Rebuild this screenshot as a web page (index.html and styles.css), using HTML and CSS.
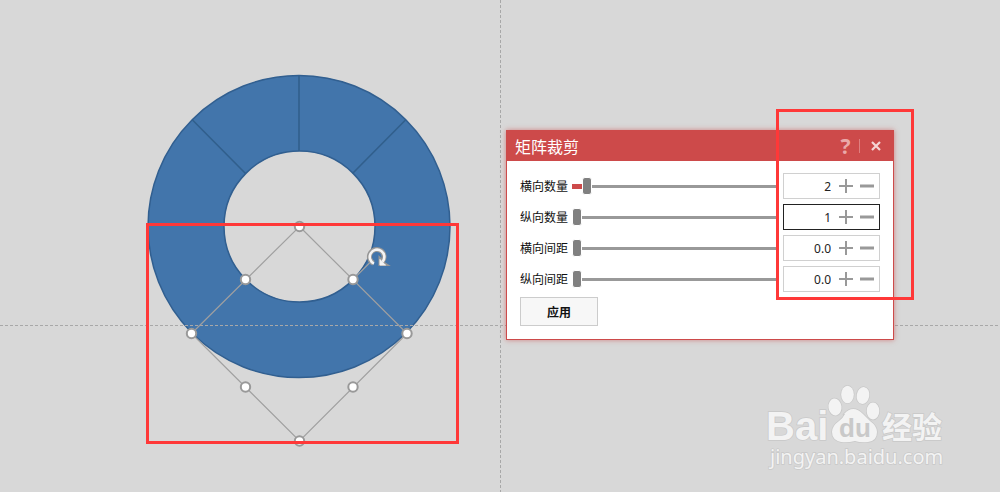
FILE: index.html
```html
<!DOCTYPE html>
<html lang="zh-CN">
<head>
<meta charset="utf-8">
<title>矩阵裁剪</title>
<link rel="stylesheet" href="styles.css">
</head>
<body>
<main class="canvas">
  <svg class="drawing" width="1000" height="492" viewBox="0 0 1000 492" aria-hidden="true">
    <path class="ring" fill-rule="evenodd" d="M148 226.500a151 151 0 1 0 302 0a151 151 0 1 0-302 0zM224 226.500a75.500 75.500 0 1 0 151 0a75.500 75.500 0 1 0-151 0z"/>
    <path class="cut" d="M299 76v75M192.500 120l53 53.500M405.500 120l-53 53.500"/>
  </svg>
  <div class="guide guide-x"></div>
  <div class="guide guide-y"></div>
  <svg class="drawing" width="1000" height="492" viewBox="0 0 1000 492" aria-hidden="true">
    <path class="outline" d="M299.500 226.500L407 333.500L299.500 441L191.500 333.500zM353 279.500l17-17"/>
    <g class="handles">
      <circle cx="299.500" cy="226.500" r="4.700"/><circle cx="245.500" cy="279.500" r="4.700"/>
      <circle cx="353" cy="279.500" r="4.700"/><circle cx="191.500" cy="333.500" r="4.700"/>
      <circle cx="407" cy="333.500" r="4.700"/><circle cx="245.500" cy="387" r="4.700"/>
      <circle cx="353" cy="387" r="4.700"/><circle cx="299.500" cy="441" r="4.700"/>
    </g>
    <g class="rotate">
      <path class="rotate-edge" d="M373.500 263.300A7.300 7.300 0 1 1 382.300 261.500"/>
      <path class="rotate-tip" d="M379.500 257.500v7.500h8l-3-2z"/>
      <path class="rotate-line" d="M374 263.600A7.300 7.300 0 1 1 382.500 261.800"/>
      <path class="rotate-fill" d="M380 259.500v5.500h5.500l-2.500-2z"/>
    </g>
  </svg>

  <form class="dialog" onsubmit="return false">
    <header class="title-bar">
      <h1 class="title">矩阵裁剪</h1>
      <button class="title-button help" type="button" aria-label="帮助">?</button>
      <button class="title-button close" type="button" aria-label="关闭">
        <svg width="10" height="10" viewBox="0 0 10 10"><path d="M1 1l8 8M9 1l-8 8"/></svg>
      </button>
    </header>
    <div class="fields">
      <div class="field">
        <label for="columns">横向数量</label>
        <input class="slider filled" id="columns" type="range" min="1" max="20" value="2">
        <div class="spin"><input type="text" value="2" aria-label="横向数量数值"><button type="button" class="step" aria-label="增加"><svg width="14" height="14" viewBox="0 0 14 14"><path d="M0 7h14M7 0v14"/></svg></button><button type="button" class="step" aria-label="减少"><svg class="minus" width="14" height="14" viewBox="0 0 14 14"><path d="M0 7h14"/></svg></button></div>
      </div>
      <div class="field">
        <label for="rows">纵向数量</label>
        <input class="slider" id="rows" type="range" min="1" max="20" value="1">
        <div class="spin active"><input type="text" value="1" aria-label="纵向数量数值"><button type="button" class="step" aria-label="增加"><svg width="14" height="14" viewBox="0 0 14 14"><path d="M0 7h14M7 0v14"/></svg></button><button type="button" class="step" aria-label="减少"><svg class="minus" width="14" height="14" viewBox="0 0 14 14"><path d="M0 7h14"/></svg></button></div>
      </div>
      <div class="field">
        <label for="gap-x">横向间距</label>
        <input class="slider" id="gap-x" type="range" min="0" max="100" value="0">
        <div class="spin"><input type="text" value="0.0" aria-label="横向间距数值"><button type="button" class="step" aria-label="增加"><svg width="14" height="14" viewBox="0 0 14 14"><path d="M0 7h14M7 0v14"/></svg></button><button type="button" class="step" aria-label="减少"><svg class="minus" width="14" height="14" viewBox="0 0 14 14"><path d="M0 7h14"/></svg></button></div>
      </div>
      <div class="field">
        <label for="gap-y">纵向间距</label>
        <input class="slider" id="gap-y" type="range" min="0" max="100" value="0">
        <div class="spin"><input type="text" value="0.0" aria-label="纵向间距数值"><button type="button" class="step" aria-label="增加"><svg width="14" height="14" viewBox="0 0 14 14"><path d="M0 7h14M7 0v14"/></svg></button><button type="button" class="step" aria-label="减少"><svg class="minus" width="14" height="14" viewBox="0 0 14 14"><path d="M0 7h14"/></svg></button></div>
      </div>
      <button class="apply" type="submit">应用</button>
    </div>
  </form>

  <div class="mark mark-shape"></div>
  <div class="mark mark-values"></div>

  <svg class="brand" width="200" height="100" viewBox="0 0 200 100" role="img" aria-label="Baidu 经验 jingyan.baidu.com">
    <g class="brand-ink">
      <text class="brand-name" x="6" y="60">Bai</text>
      <ellipse cx="75" cy="27" rx="6.500" ry="8.500" transform="rotate(-8 75 27)"/>
      <ellipse cx="87.500" cy="14.500" rx="6.300" ry="8.700"/>
      <ellipse cx="103" cy="15.500" rx="6.300" ry="8.500" transform="rotate(10 103 15.500)"/>
      <ellipse cx="113" cy="31" rx="6.300" ry="8.500"/>
      <path d="M84 34q9-10 19 0q4 4 7 7q7 5 7 11q0 9-9 10q-7 1-13-1q-8 2-14 1q-9-2-9-10q0-6 7-11q4-3 6-7z"/>
      <text class="brand-cjk" x="122" y="58">经验</text>
      <text class="brand-url" x="10" y="84">jingyan.baidu.com</text>
    </g>
    <text class="brand-du" x="79" y="57">du</text>
  </svg>
</main>
</body>
</html>
```
FILE: styles.css
```css
* { box-sizing: border-box; }
body { margin: 0; font-family: "Noto Sans", "Noto Sans CJK SC", sans-serif; background: #d8d8d8; }
.canvas { position: relative; min-height: 100vh; overflow: hidden; }

.drawing { position: absolute; left: 0; top: 0; }
.ring { fill: #4275ab; stroke: #315f90; stroke-width: 1.5; }
.cut { fill: none; stroke: #315f8c; stroke-width: 1.6; }
.outline { fill: none; stroke: #a0a0a0; stroke-width: 1.2; }
.handles { fill: #fff; stroke: #999; stroke-width: 2; }
.rotate path { fill: none; }
.rotate .rotate-edge { stroke: #969696; stroke-width: 5; }
.rotate .rotate-line { stroke: #f4f4f4; stroke-width: 2.600; }
.rotate .rotate-tip { fill: #969696; stroke: #969696; stroke-width: 2; }
.rotate .rotate-fill { fill: #f4f4f4; stroke: #f4f4f4; }

.guide { position: absolute; }
.guide-x { left: 0; right: 0; top: 325px; height: 1px; background: repeating-linear-gradient(90deg, #a8a8a8 0 3px, transparent 3px 5px); }
.guide-y { top: 0; bottom: 0; left: 500px; width: 1px; background: repeating-linear-gradient(#a8a8a8 0 3px, transparent 3px 5px); }

.dialog {
  position: absolute; left: 506px; top: 130px; width: 388px;
  background: #fff; border: 1px solid #cd4a4a; box-shadow: 0 0 5px #cd4a4a99;
}
.title-bar { display: flex; align-items: center; height: 30px; padding: 0 8px; background: #cd4a4a; }
.title { flex: 1; margin: 0; font-size: 16px; font-weight: 400; color: #fff; }
.title-button { display: grid; place-items: center; padding: 0; border: 0; background: none; font-family: inherit; color: #eaa9a9; }
.help { width: 28px; font-size: 21px; line-height: 14px; font-weight: 700; border-right: 1px solid #df8080; }
.close { width: 18px; margin-left: 7px; }
.close svg { fill: none; stroke: #f5d5d5; stroke-width: 2.200; }

.fields { display: flex; flex-direction: column; gap: 5px; padding: 12px 13px 13px; }
.field { display: flex; align-items: center; height: 26px; }
.field label { width: 52px; font-size: 12px; color: #111; }
.slider {
  flex: 1; min-width: 0; height: 26px; margin: 0 6px 0 0; appearance: none;
  background: linear-gradient(#999, #999) center / 100% 3px no-repeat;
}
.slider.filled { background: linear-gradient(#cd4a4a, #cd4a4a) left center / 12px 5px no-repeat, linear-gradient(#999, #999) center / 100% 3px no-repeat; }
.slider::-webkit-slider-thumb { appearance: none; width: 10px; height: 18px; border: 1px solid #fff; border-radius: 3px; background: #808080; }
.spin { display: flex; align-items: center; width: 97px; height: 26px; padding-right: 5px; border: 1px solid #d0d0d0; background: #fff; }
.spin.active { border-color: #222; }
.spin input { flex: 1; min-width: 0; padding: 0 8px 0 0; border: 0; outline: 0; background: none; text-align: right; font-family: inherit; font-size: 12px; color: #222; }
.step { display: grid; width: 14px; padding: 0; border: 0; background: none; }
.step + .step { margin-left: 7px; }
.step svg { fill: none; stroke: #999; stroke-width: 2; }
.step .minus { stroke-width: 3; }
.apply { align-self: flex-start; width: 78px; height: 29px; padding: 0; border: 1px solid #ccc; background: #f7f7f7; font-family: inherit; font-size: 12px; font-weight: 700; color: #111; }

.mark { position: absolute; border: 3px solid #ff3838; pointer-events: none; }
.mark-shape { left: 146px; top: 223px; width: 313px; height: 221px; }
.mark-values { left: 776px; top: 109px; width: 138px; height: 191px; }

.brand { position: absolute; left: 760px; top: 380px; }
.brand-ink { fill: #f3f3f3; stroke: #c8c8c8; stroke-width: 1.500; paint-order: stroke; }
.brand-name { font: 700 40px "Liberation Sans", sans-serif; }
.brand-cjk { font: 700 30px "Noto Sans CJK SC", sans-serif; }
.brand-url { font: 400 20px "Noto Sans", sans-serif; }
.brand-du { font: 700 26px "Liberation Sans", sans-serif; fill: #c9c9c9; }
```
